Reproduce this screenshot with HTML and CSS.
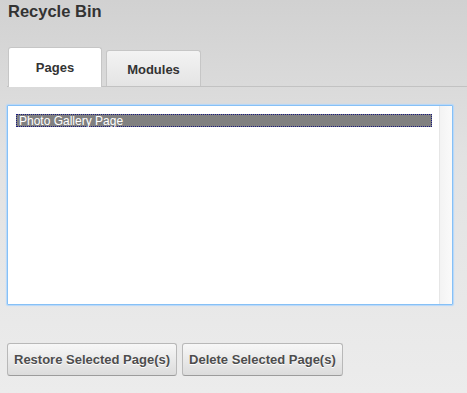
FILE: index.html
```html
<!doctype html>
<html lang="en">
  <head>
    <meta charset="UTF-8" />
    <meta name="viewport" content="width=device-width, initial-scale=1.0" />
    <title>Recycle Bin</title>
    <link rel="stylesheet" href="styles.css">
  </head>
  <body>
    <h2 class="title">Recycle Bin</h2>

    <!-- Abas -->
    <div class="tabs">
      <div class="tab active">Pages</div>
      <div class="tab">Modules</div>
    </div>

    <!-- Lista de itens -->
    <div class="listbox">
      <div class="list-items">
        <div class="item selected">Photo Gallery Page</div>
      </div>
      <div class="scroll-track"></div>
    </div>

    <div class="actions">
      <button class="btn">Restore Selected Page(s)</button>
      <button class="btn">Delete Selected Page(s)</button>
    </div>
  </body>
</html>
```
FILE: styles.css
```css
html,
body {
  height: 100%;
}
body {
  margin: 0;
  padding: 0 0 0 7px;
  font-family: "Liberation Sans", Arial, sans-serif;
  background: linear-gradient(to bottom, #d1d1d1 0%, #e2e2e2 40%, #ececec 100%);
  overflow: hidden;
}
.title {
  margin: 0;
  padding: 1px 0 0 1px;
  font-size: 16.5px;
  line-height: 20px;
  color: #333;
}
.tabs {
  display: flex;
  align-items: flex-end;
  gap: 4px;
  margin-top: 26px;
  padding-left: 1px;
  border-bottom: 1px solid #c2c2c2;
}
.tab {
  box-sizing: border-box;
  width: 94px;
  height: 36px;
  display: flex;
  align-items: center;
  justify-content: center;
  border: 1px solid #c6c6c6;
  border-bottom: none;
  border-radius: 3px 3px 0 0;
  background: linear-gradient(to bottom, #f3f3f3, #e4e4e4);
  font-size: 13px;
  font-weight: bold;
  color: #333;
  padding-top: 1px;
}
.tab + .tab {
  width: 95px;
}
.tab.active {
  height: 40px;
  margin-bottom: -1px;
  background: #fff;
  padding-top: 0;
}
.listbox {
  box-sizing: border-box;
  display: flex;
  width: 446px;
  height: 200px;
  margin-top: 18px;
  background: #fff;
  border: 1px solid #86c0f6;
  box-shadow: 0 0 1px 1px #b5d8fa;
  border-radius: 1px;
}
.list-items {
  flex: 1;
  padding: 8px 7px 0 8px;
}
.item {
  height: 13px;
  font-size: 12px;
  line-height: 12px;
  color: #fff;
  padding-left: 2px;
  box-sizing: border-box;
}
.item.selected {
  background: #808080;
  border: 1px dotted #1a1a80;
}
.scroll-track {
  width: 12px;
  border-left: 1px solid #e6e6e6;
  background: linear-gradient(to right, #f3f3f3, #fafafa);
}
.actions {
  display: flex;
  gap: 5px;
  margin-top: 38px;
}
.btn {
  height: 33px;
  padding: 0 6px;
  border: 1px solid #b8b8b8;
  border-bottom-color: #9c9c9c;
  border-radius: 3px;
  background: linear-gradient(to bottom, #f7f7f7, #dcdcdc);
  font-family: "Liberation Sans", Arial, sans-serif;
  font-size: 13px;
  font-weight: bold;
  color: #4d4d4d;
  text-shadow: 0 1px 0 #fff;
  cursor: pointer;
}
.btn:hover {
  background: linear-gradient(to bottom, #fbfbfb, #e4e4e4);
}
```
